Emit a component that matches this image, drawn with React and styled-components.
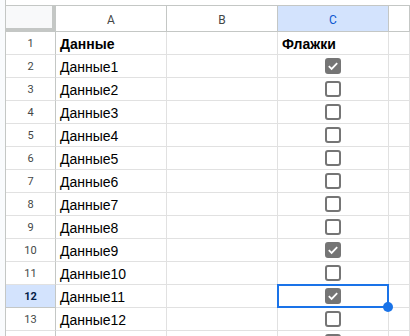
import React from "react";
import styled, { createGlobalStyle } from "styled-components";

const Global = createGlobalStyle`
  html, body {
    margin: 0;
    padding: 0;
    background: #f9fbfd;
    overflow: hidden;
  }
  #root {
    width: 410px;
    height: 336px;
  }
`;

const Page = styled.div`
  width: 410px;
  height: 336px;
  overflow: hidden;
  padding-left: 5px;
  box-sizing: border-box;
  display: flex;
`;

const Sheet = styled.div`
  flex: 1;
  background: #fff;
  padding-top: 5px;
  border-left: 1px solid #c4c7c5;
  overflow: hidden;
`;

const Grid = styled.div`
  display: grid;
  grid-template-columns: 50px 111px 111px 111px 1fr;
  grid-template-rows: 26px;
  grid-auto-rows: 23px;
  border-top: 1px solid #c4c7c5;
  font-family: "Liberation Sans", Arial, sans-serif;
`;

const Corner = styled.div`
  box-sizing: border-box;
  background: #f8f9fa;
  border-right: 4px solid #c4c7c5;
  border-bottom: 4px solid #c4c7c5;
`;

const ColHead = styled.div`
  box-sizing: border-box;
  display: flex;
  align-items: center;
  justify-content: center;
  padding-top: 2px;
  font-family: Roboto, "Liberation Sans", sans-serif;
  font-size: 12px;
  color: ${(p) => (p.$active ? "#0b57d0" : "#444746")};
  background: ${(p) => (p.$active ? "#d3e3fd" : "#fff")};
  border-right: 1px solid #c4c7c5;
  border-bottom: 1px solid #c4c7c5;
`;

const RowHead = styled.div`
  box-sizing: border-box;
  display: flex;
  align-items: center;
  justify-content: center;
  padding-top: 1px;
  font-family: Roboto, "Liberation Sans", sans-serif;
  font-size: 11px;
  font-weight: ${(p) => (p.$active ? 700 : 400)};
  color: ${(p) => (p.$active ? "#041e49" : "#444746")};
  background: ${(p) => (p.$active ? "#d3e3fd" : "#fff")};
  border-right: 1px solid #c4c7c5;
  border-bottom: 1px solid ${(p) => (p.$active ? "#c4c7c5" : "#e1e1e1")};
`;

const Cell = styled.div`
  position: relative;
  box-sizing: border-box;
  display: flex;
  align-items: center;
  justify-content: ${(p) => (p.$center ? "center" : "flex-start")};
  padding: 2px 4px 0;
  font-size: 14px;
  font-weight: ${(p) => (p.$bold ? 700 : 400)};
  color: #000;
  white-space: nowrap;
  border-right: 1px solid #e1e1e1;
  border-bottom: 1px solid #e1e1e1;
`;

const Selection = styled.div`
  position: absolute;
  left: -1px;
  top: -1px;
  right: -1px;
  bottom: -1px;
  border: 2px solid #1a73e8;
  pointer-events: none;
  z-index: 2;
`;

const FillHandle = styled.div`
  position: absolute;
  right: -6px;
  bottom: -6px;
  width: 10px;
  height: 10px;
  border-radius: 50%;
  background: #1a73e8;
  z-index: 3;
`;

const Box = styled.span`
  box-sizing: border-box;
  width: 16px;
  height: 16px;
  margin-top: -2px;
  border-radius: 3px;
  border: 2px solid #757575;
  background: ${(p) => (p.$checked ? "#757575" : "#fff")};
  display: flex;
  align-items: center;
  justify-content: center;
`;

const Checkbox = ({ checked }) => (
  <Box $checked={checked}>
    {checked && (
      <svg width="12" height="12" viewBox="0 0 12 12">
        <path d="M1.8 6.2 L4.6 8.9 L10.2 3.2" fill="none" stroke="#fff" strokeWidth="1.8" />
      </svg>
    )}
  </Box>
);

// row 14 is only partly in view: its label and text lie below the edge
const rows = [
  { n: 1, a: "Данные", c: "Флажки", bold: true },
  ...Array.from({ length: 13 }, (_, i) => ({
    n: i + 2,
    a: `Данные${i + 1}`,
    checked: [1, 9, 11].includes(i + 1),
  })),
];

export default function App() {
  return (
    <>
      <Global />
      <Page>
        <Sheet>
          <Grid>
            <Corner />
            <ColHead>A</ColHead>
            <ColHead>B</ColHead>
            <ColHead $active>C</ColHead>
            <ColHead />
            {rows.map((r) => {
              const active = r.n === 12;
              const clipped = r.n === 14;
              return (
                <React.Fragment key={r.n}>
                  <RowHead $active={active}>{clipped ? "" : r.n}</RowHead>
                  <Cell $bold={r.bold}>{clipped ? "" : r.a}</Cell>
                  <Cell />
                  {r.bold ? (
                    <Cell $bold>{r.c}</Cell>
                  ) : (
                    <Cell $center>
                      <Checkbox checked={r.checked} />
                      {active && (
                        <Selection>
                          <FillHandle />
                        </Selection>
                      )}
                    </Cell>
                  )}
                  <Cell />
                </React.Fragment>
              );
            })}
          </Grid>
        </Sheet>
      </Page>
    </>
  );
}
